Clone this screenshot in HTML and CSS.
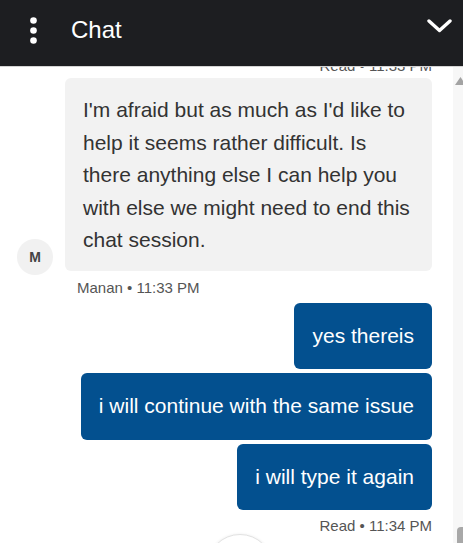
FILE: index.html
```html
<!DOCTYPE html>
<html lang="en">
<head>
    <meta charset="UTF-8">
    <meta name="viewport" content="width=device-width, initial-scale=1.0">
    <title>Chat</title>
    <link rel="stylesheet" href="styles.css">
</head>
<body>
    <div class="header">
        <svg class="kebab" width="7" height="27" viewBox="0 0 7 27">
            <circle cx="3.5" cy="3.5" r="3.3" fill="#fff"/>
            <circle cx="3.5" cy="13.5" r="3.3" fill="#fff"/>
            <circle cx="3.5" cy="23.5" r="3.3" fill="#fff"/>
        </svg>
        <div class="title">Chat</div>
        <svg class="chevron" width="25" height="14" viewBox="0 0 25 14">
            <polyline points="2,2 12.5,11.5 23,2" fill="none" stroke="#fff" stroke-width="3.4" stroke-linecap="round" stroke-linejoin="round"/>
        </svg>
    </div>

    <div class="main">
        <div class="messages">
            <div class="meta read">Read • 11:33 PM</div>

            <div class="agent-row">
                <div class="avatar">M</div>
                <div class="bubble agent">I'm afraid but as much as I'd like to help it seems rather difficult. Is there anything else I can help you with else we might need to end this chat session.</div>
            </div>
            <div class="meta sender">Manan • 11:33 PM</div>

            <div class="bubble user">yes thereis</div>
            <div class="bubble user">i will continue with the same issue</div>
            <div class="bubble user">i will type it again</div>
            <div class="meta read">Read • 11:34 PM</div>

            <div class="scroll-btn"></div>
        </div>

        <div class="scrollbar">
            <svg class="arrow" width="10" height="10" viewBox="0 0 10 10">
                <polygon points="7.5,1 2,9 13,9" fill="#a3a3a3"/>
            </svg>
            <div class="thumb"></div>
        </div>
    </div>
</body>
</html>
```

FILE: styles.css
```css
body {
    margin: 0;
    height: 100vh;
    display: flex;
    flex-direction: column;
    overflow: hidden;
    font-family: "Liberation Sans", Arial, sans-serif;
    background: #fff;
}

.header {
    height: 67px;
    flex-shrink: 0;
    display: flex;
    align-items: center;
    padding: 0 11px 6px 30px;
    box-sizing: border-box;
    background-color: #1d1e21;
    border-bottom: 1px solid #d4d4d4;
}

.kebab {
    display: block;
}

.title {
    color: #fff;
    font-size: 24px;
    margin-left: 34px;
    flex: 1;
}

.chevron {
    display: block;
    margin-bottom: 8px;
}

.main {
    flex: 1;
    min-height: 0;
    display: flex;
    overflow: hidden;
}

.messages {
    flex: 1;
    display: flex;
    flex-direction: column;
    padding: 0 21px 0 17px;
    margin-top: -9px;
}

.meta {
    font-size: 15px;
    line-height: 16px;
    color: #555;
    flex-shrink: 0;
}

.meta.read {
    text-align: right;
    margin-top: 8px;
}

.messages > .meta.read:first-child {
    margin-top: 0;
}

.meta.sender {
    margin: 9px 0 7px 60px;
}

.agent-row {
    display: flex;
    align-items: flex-end;
    gap: 12px;
    margin-top: 4px;
    flex-shrink: 0;
}

.avatar {
    width: 36px;
    height: 36px;
    border-radius: 50%;
    background-color: #f1f1f1;
    color: #444;
    font-size: 14px;
    font-weight: bold;
    display: flex;
    align-items: center;
    justify-content: center;
    margin-bottom: -4px;
    flex-shrink: 0;
}

.bubble {
    font-size: 21px;
    line-height: 32.5px;
    border-radius: 6px;
    flex-shrink: 0;
}

.bubble.agent {
    flex: 1;
    background-color: #f2f2f2;
    color: #333;
    padding: 16px 15px 14px 18px;
}

.bubble.user {
    align-self: flex-end;
    background-color: #03508f;
    color: #fff;
    padding: 17px 18px;
}

.bubble.user + .bubble.user {
    margin-top: 4px;
}

.scroll-btn {
    width: 64px;
    height: 64px;
    border-radius: 50%;
    border: 1px solid #e2e2e2;
    box-shadow: 0 0 3px rgba(0, 0, 0, 0.08);
    background: #fff;
    margin-left: 190px;
    flex-shrink: 0;
}

.scrollbar {
    width: 10px;
    flex-shrink: 0;
    background-color: #f7f7f7;
    display: flex;
    flex-direction: column;
    justify-content: space-between;
}

.arrow {
    display: block;
    margin-top: 9px;
}

.thumb {
    height: 16px;
    margin-left: 4px;
    background-color: #a8a8a8;
    border-radius: 4px 0 0 0;
}
```
